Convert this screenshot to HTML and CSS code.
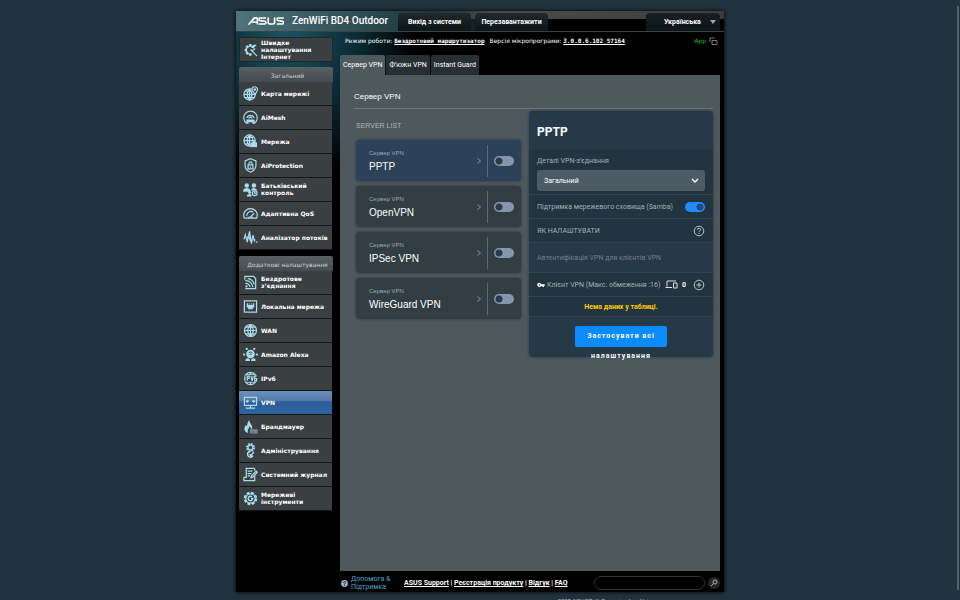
FILE: index.html
```html
<!DOCTYPE html>
<html lang="uk">
<head>
<meta charset="utf-8">
<title>ZenWiFi BD4 Outdoor</title>
<link rel="stylesheet" href="styles.css">
</head>
<body>
<div class="router">
  <header class="topbar">
    <svg class="logo" viewBox="0 0 36 8" role="img" aria-label="ASUS"><g fill="none" stroke="#fff" stroke-width="1.6"><path d="M.5 7.6 6.4.9H9M3.5 4.8 9 5.3M9.4.4V7.6"/><path d="M18 1H11.6Q11 1 11 2.1T12.2 3.6L17 4.2Q18 4.4 18 5.6T16.8 7H10.8"/><path d="M20.2.4V5.4Q20.2 7 21.8 7H25Q26.6 7 26.6 5.4V.4"/><path d="M35.8 1H29.6Q29 1 29 2.1T30.2 3.6L34.6 4.2Q35.6 4.4 35.6 5.6T34.4 7H28.8"/></g></svg>
    <h1 class="model">ZenWiFi BD4 Outdoor</h1>
    <div class="actions">
      <button class="top-btn" type="button">Вихід з системи</button>
      <button class="top-btn" type="button">Перезавантажити</button>
    </div>
    <div class="language">
      <select aria-label="Мова"><option>Українська</option></select>
      <svg viewBox="0 0 6 4"><path d="M0 0H6L3 4Z" fill="#9aa6aa"/></svg>
    </div>
  </header>
  <div class="columns">
    <nav class="sidebar">
      <a class="item quick" href="#"><svg viewBox="0 0 16 16"><path d="M9 13.4A5 5 0 1 1 12.4 6" stroke-width="2.6" stroke-dasharray="2.4 1.3"/><path d="M9 12.6A4.2 4.2 0 1 1 11.5 6.6M8 8 15 15M13 7 9 10M12 3l2 1M9 6l4-3"/></svg>Швидке налаштування Інтернет</a>
      <h2 class="group">Загальний</h2>
      <ul>
        <li><a class="item" href="#"><svg viewBox="0 0 16 16"><circle cx="7" cy="9" r="6"/><path d="M1 9H13M7 3V15M2.5 5.5H9M2 12.5H12M7 3Q2 9 7 15M7 3Q12 9 7 15"/><path d="M13 9Q9.5 5 9.5 3.8A3 3 0 0 1 15.5 3.8Q15.5 5 13 9Z" fill="#3c4143"/><circle cx="12.6" cy="3.8" r=".8"/></svg>Карта мережі</a></li>
        <li><a class="item" href="#"><svg viewBox="0 0 16 16"><path d="M4 14.4A7.2 7.2 0 1 1 12 14.4"/><path d="M4 8.4A4.3 4.3 0 0 1 12 8.4M6 9A2.2 2.2 0 0 1 10 9"/><path d="M3.6 10H12.4V14.6H10V13H6V14.6H3.6Z" class="solid"/></svg>AiMesh</a></li>
        <li><a class="item" href="#"><svg viewBox="0 0 16 16"><circle cx="7" cy="7" r="6"/><path d="M1 7H13M7 1V13M2.5 3.5H11.5M2.5 10.5H8M7 1Q2 7 7 13M7 1Q12 7 11 8"/><path d="M8 9H15V14H8Z" class="solid"/><circle cx="11.5" cy="8.5" r="1.6" class="solid"/></svg>Мережа</a></li>
        <li><a class="item" href="#"><svg viewBox="0 0 16 16"><path d="M8 .8 13.8 3V8Q13.8 12.6 8 15.2 2.2 12.6 2.2 8V3Z"/><path d="M5.4 7.4H10.6V11.6H5.4Z"/><path d="M6.4 7V5.8A1.6 1.6 0 0 1 9.6 5.8V7M8 9V10.5"/></svg>AiProtection</a></li>
        <li><a class="item" href="#"><svg viewBox="0 0 16 16"><g class="solid"><circle cx="4" cy="3.6" r="2.4"/><circle cx="11.6" cy="3.6" r="2.4"/><path d="M.2 10.5V8.5Q1 6.3 4 6.3T7.8 8.5V10.5Z"/><path d="M8.5 9V8.5Q9 6.3 11.6 6.3T15.4 9Z"/><circle cx="7" cy="11" r="1.6"/><path d="M4 15.5Q4 12.8 7 12.8T9 15.5Z"/></g><circle cx="12.5" cy="12" r="2.5"/><path d="M12.5 10.5V12H14"/></svg>Батьківський контроль</a></li>
        <li><a class="item" href="#"><svg viewBox="0 0 16 16"><path d="M1.5 13A7.2 7.2 0 1 1 14.5 13Z"/><path d="M4 10.5A4.5 4.5 0 0 1 11 6.6M12 8 8 11.4M5 12H11"/></svg>Адаптивна QoS</a></li>
        <li><a class="item" href="#"><svg viewBox="0 0 16 16"><path d="M1 10 2.5 5 4.5 13 7 1.5 9 14.5 10.6 5.5 12 11.5 13 10"/><path d="M4.5 9 6 6 8 12M13.6 13H15.5"/></svg>Аналізатор потоків</a></li>
      </ul>
      <h2 class="group second">Додаткові налаштування</h2>
      <ul>
        <li><a class="item" href="#"><svg viewBox="0 0 16 16"><path d="M3 13.5V14.5H13.5V4L11.5 1.5H2V5"/><path d="M2.5 6A7.5 7.5 0 0 1 10.5 13M2.5 9A4.5 4.5 0 0 1 7.5 13M5 3.5A9 9 0 0 1 12 10"/><circle cx="3.8" cy="12" r="1.2" class="solid"/></svg>Бездротове з’єднання</a></li>
        <li><a class="item" href="#"><svg viewBox="0 0 16 16"><path d="M1.5 2H14.5V14H1.5Z"/><path d="M4 4.5H12V9H10.5V11H5.5V9H4Z" class="solid"/><path d="M6.2 4V6.5M8 4V6.5M9.8 4V6.5" stroke="#3c4143"/></svg>Локальна мережа</a></li>
        <li><a class="item" href="#"><svg viewBox="0 0 16 16"><circle cx="8" cy="8" r="6.4"/><path d="M1.6 8H14.4M8 1.6V14.4M2.8 4.5H13.2M2.8 11.5H13.2M8 1.6Q2 8 8 14.4M8 1.6Q14 8 8 14.4"/></svg>WAN</a></li>
        <li><a class="item" href="#"><svg viewBox="0 0 16 16"><circle cx="8" cy="7.5" r="4.6" class="solid"/><path d="M6 6Q8 4.6 10 6M6.6 8Q8 7 9.4 8" stroke="#3c4143" stroke-width=".9"/><g class="solid"><circle cx="4" cy="2" r="1.2"/><circle cx="12" cy="2" r="1.2"/><circle cx="1.2" cy="8" r="1.2"/><circle cx="14.8" cy="8" r="1.2"/><path d="M2.5 15Q2.5 12 5 12T7.5 15ZM8.5 15Q8.5 12 11 12T13.5 15Z"/></g></svg>Amazon Alexa</a></li>
        <li><a class="item" href="#"><svg viewBox="0 0 16 16"><circle cx="8" cy="8" r="6.5"/><path d="M8 1.5V4.5M8 11.5V14.5M3 4H13M3 12H13"/><path d="M1 5H15V11H1Z" class="mask"/><path d="M2 5.5V10.5M4.5 10.5V5.5H6.5V8H4.5M8.5 5.5 9.7 10.5 11 5.5M14.5 5.5H12.5V10.5H14.5V8H12.5"/></svg>IPv6</a></li>
        <li><a class="item active" href="#"><svg viewBox="0 0 16 16"><path d="M1.5 2.5H14.5V11H1.5ZM8 11V14M3 14H13"/><path d="M3.5 6.8H6.5M9.5 6.8H12.5M5 5.5 3.5 6.8 5 8M11 5.5 12.5 6.8 11 8"/></svg>VPN</a></li>
        <li><a class="item" href="#"><svg viewBox="0 0 16 16"><path d="M5.5 15Q1 13.5 1.5 9.5 2 7.5 3.2 6L4.2 8Q4.6 3.5 6.5 1 7 4 8.5 5.5 10.5 7.5 9.8 10.5H8.5Q8 8.5 6.8 7.5 6.8 10 5.4 11 4.6 13 5.5 15Z" class="solid"/><path d="M8 11.5H15V14.8H8ZM8 13H15M11 11.5V13M13 13V14.8" opacity=".5"/></svg>Брандмауер</a></li>
        <li><a class="item" href="#"><svg viewBox="0 0 16 16"><circle cx="8" cy="4.8" r="3.6" stroke-width="2.4" stroke-dasharray="1.8 1"/><circle cx="8" cy="4.8" r="2.6"/><path d="M8 9A3 3 0 1 0 10.5 13.5M7 12 8.5 13.5 11.5 9.5" stroke-width="1.6"/></svg>Адміністрування</a></li>
        <li><a class="item" href="#"><svg viewBox="0 0 16 16"><path d="M12.5 1.5H3.5V11H1V14.5H12.5V9M12.5 1.5V4M5 4.5H10M5 7H9M5 9.5H7.5"/><path d="M8.5 11.5 9 9.5 14 4.5 15.2 5.8 10.4 10.8Z"/></svg>Системний журнал</a></li>
        <li><a class="item" href="#"><svg viewBox="0 0 16 16"><circle cx="8" cy="8" r="6" stroke-width="2.4" stroke-dasharray="3 1.7"/><circle cx="8" cy="8" r="5"/><path d="M9.6 6.2A2.4 2.4 0 1 0 10.4 8H8.5" stroke-width="1.5"/></svg>Мережеві інструменти</a></li>
      </ul>
    </nav>
    <main class="content">
      <div class="status">
        <span>Режим роботи: <a href="#">Бездротовий маршрутизатор</a>Версія мікропрограми: <a href="#">3.0.0.6.102_57164</a></span>
        <span class="app">App</span>
        <svg class="copy" viewBox="0 0 9 9"><path d="M1 5V1H6M3 3.5H8V7.5H3Z" fill="none" stroke="#737b7e"/></svg>
      </div>
      <div class="tabs">
        <a class="tab current" href="#">Сервер VPN</a>
        <a class="tab" href="#">Ф’южн VPN</a>
        <a class="tab" href="#">Instant Guard</a>
      </div>
      <section class="panel">
        <h2 class="title">Сервер VPN</h2>
        <div class="vpn">
          <div class="servers">
            <h3 class="list-title">SERVER LIST</h3>
            <div class="server selected">
              <div class="server-name"><small>Сервер VPN</small><strong>PPTP</strong></div>
              <svg class="chevron" viewBox="0 0 4 6"><path d="M.5.5 3.5 3 .5 5.5"/></svg>
              <div class="server-toggle"><input type="checkbox" class="switch" aria-label="PPTP"></div>
            </div>
            <div class="server">
              <div class="server-name"><small>Сервер VPN</small><strong>OpenVPN</strong></div>
              <svg class="chevron" viewBox="0 0 4 6"><path d="M.5.5 3.5 3 .5 5.5"/></svg>
              <div class="server-toggle"><input type="checkbox" class="switch" aria-label="OpenVPN"></div>
            </div>
            <div class="server">
              <div class="server-name"><small>Сервер VPN</small><strong>IPSec VPN</strong></div>
              <svg class="chevron" viewBox="0 0 4 6"><path d="M.5.5 3.5 3 .5 5.5"/></svg>
              <div class="server-toggle"><input type="checkbox" class="switch" aria-label="IPSec VPN"></div>
            </div>
            <div class="server">
              <div class="server-name"><small>Сервер VPN</small><strong>WireGuard VPN</strong></div>
              <svg class="chevron" viewBox="0 0 4 6"><path d="M.5.5 3.5 3 .5 5.5"/></svg>
              <div class="server-toggle"><input type="checkbox" class="switch" aria-label="WireGuard VPN"></div>
            </div>
          </div>
          <form class="details">
            <h3 class="details-title">PPTP</h3>
            <div class="field">
              <label for="vpn-details">Деталі VPN-з’єднання</label>
              <div class="dropdown">
                <select id="vpn-details"><option>Загальний</option></select>
                <svg viewBox="0 0 8 5"><path d="M1 1 4 4 7 1" fill="none" stroke="#fff" stroke-width="1.3"/></svg>
              </div>
            </div>
            <div class="row">
              <label for="samba">Підтримка мережевого сховища (Samba)</label>
              <input type="checkbox" class="switch" id="samba" checked>
            </div>
            <div class="row">
              <span>ЯК НАЛАШТУВАТИ</span>
              <svg class="round" viewBox="0 0 12 12"><circle cx="6" cy="6" r="4.8"/><path d="M4.3 4.8Q4.4 3.3 6 3.3T7.7 4.8Q7.7 5.5 6.8 6 6 6.5 6 7.1M6 8V9"/></svg>
            </div>
            <div class="row auth">Автентифікація VPN для клієнтів VPN</div>
            <div class="row clients">
              <svg class="key" viewBox="0 0 8 6"><path d="M2.3.7A2.2 2.2 0 1 0 4.3 4H5.3V5H7V4H7.7V2.2H4.3Q3.7.7 2.3.7Z" fill="#fff"/><circle cx="2.3" cy="3" r=".8" fill="#21343f"/></svg>
              <span>Клієнт VPN (Макс. обмеження :16)</span>
              <svg class="devices" viewBox="0 0 13 9"><path d="M2 6.5V1H11M.5 7.5H7M8.5 3H12V8H8.5Z" fill="none" stroke="#d8dfe2"/></svg>
              <b>0</b>
              <button class="add" type="button" aria-label="Додати"><svg class="round" viewBox="0 0 12 12"><circle cx="6" cy="6" r="4.8"/><path d="M3.4 6H8.6M6 3.4V8.6"/></svg></button>
            </div>
            <div class="row empty">Нема даних у таблиці.</div>
            <div class="submit"><button class="apply" type="button">Застосувати всі налаштування</button></div>
          </form>
        </div>
      </section>
    </main>
  </div>
  <footer class="footer">
    <a class="help" href="#"><svg viewBox="0 0 7 7"><circle cx="3.5" cy="3.5" r="3.4" fill="#9ab4c0"/><path d="M2.4 2.7Q2.6 1.7 3.5 1.7T4.6 2.7Q4.5 3.3 3.5 3.9V4.5M3.5 5V5.7" fill="none" stroke="#000" stroke-width=".8"/></svg><span>Допомога &amp; Підтримка</span></a>
    <p class="links"><a href="#">ASUS Support</a> | <a href="#">Реєстрація продукту</a> | <a href="#">Відгук</a> | <a href="#">FAQ</a></p>
    <input class="search" type="text" aria-label="Пошук">
    <button class="search-btn" type="button" aria-label="Знайти"><svg viewBox="0 0 8 8"><circle cx="5" cy="3" r="2"/><path d="M3.5 4.5 1 7"/></svg></button>
  </footer>
</div>
<p class="copyright">2025 ASUSTeK Computer Inc. Усі права захищено законом.</p>
</body>
</html>
```
FILE: styles.css
```css
* { box-sizing: border-box; }
html { overflow: hidden; background: #21333e; }
body {
  position: relative;
  margin: 0;
  padding-top: 11px;
  height: 100vh;
  overflow: hidden;
  background: #21333e;
  color: #fff;
  font: 7px/8px Roboto, "Liberation Sans", sans-serif;
}
body::after {
  content: "";
  position: absolute;
  top: 6px;
  right: 1px;
  bottom: 10px;
  width: 2px;
  background: #52606a;
}
h1, h2, h3, p, ul { margin: 0; padding: 0; font-weight: normal; }
ul { list-style: none; }
a { color: inherit; text-decoration: none; }
button, input, select { margin: 0; padding: 0; border: 0; color: inherit; font: inherit; appearance: none; background: none; }

.router {
  max-width: 488px;
  margin: 0 auto;
  background:
    linear-gradient(100deg, transparent 40%, #4c4c4c 52%, #3c3c3c) top / 100% 8px no-repeat,
    linear-gradient(90deg, #4f747c, #1f3a43 180px, transparent 320px) top / 100% 20px no-repeat,
    radial-gradient(130px 150px at 50px 20px, #1b5361 0, #0d2f3a 50%, transparent) no-repeat,
    #000;
  box-shadow: 0 0 4px #000;
}
.topbar { display: flex; align-items: center; height: 21px; padding: 0 4px 0 12px; border-bottom: 1px solid #3a4346; }
.logo { flex: none; width: 36px; height: 8px; }
.model { flex: none; width: 114px; padding-left: 8px; font: 500 10px/12px Roboto, sans-serif; white-space: nowrap; }
.actions { display: flex; gap: 4px; padding-top: 2px; }
.top-btn {
  width: 73px; height: 18px;
  border-radius: 4px 4px 0 0;
  background: linear-gradient(#20292c, #0c1417);
  font: bold 7px/8px Roboto, sans-serif;
}
.language { display: flex; align-items: center; width: 74px; height: 18px; margin: 2px 0 0 auto; padding: 0 4px 0 18px; background: linear-gradient(#182023, #0c1417); border-radius: 4px 4px 0 0; }
.language select { flex: 1; min-width: 0; font: bold 7px/8px Roboto, sans-serif; }
.language svg { width: 6px; height: 4px; }

.columns { display: grid; grid-template-columns: 94px minmax(0, 1fr); column-gap: 7px; padding: 0 4px 0 3px; }
.sidebar { padding-top: 5px; }
.item {
  display: flex; align-items: center; gap: 3px;
  height: 24px; padding: 0 2px 1px 4px; margin-right: 1px;
  border-bottom: 1px solid #111618;
  background: #3a3f42;
  font: bold 6px/7px "DejaVu Sans", sans-serif;
}
.item svg { flex: none; width: 15px; height: 15px; fill: none; stroke: #a9dcec; stroke-width: 1.3; }
.item .solid { fill: #a9dcec; stroke: none; }
.item .mask { fill: #3a3f42; stroke: none; }
.quick { height: 25px; border: 1px solid #1b2a2f; margin-right: 0; padding: 0 2px 0 3px; }
.active { background: linear-gradient(#6c91b9 0, #5078a8 45%, #2c5c98 46%, #2d64a0); }
.group { height: 15px; margin: 5px 0 0; padding-left: 3px; border-radius: 2px 2px 0 0; background: linear-gradient(#586064, #454b4e); color: #ccd3d5; font: 6px/17px "DejaVu Sans", sans-serif; text-align: center; white-space: nowrap; }
.second { margin-top: 6px; }

.status { display: flex; align-items: center; height: 18px; padding: 0 2px 0 5px; font: 6px/8px "DejaVu Sans", sans-serif; white-space: nowrap; }
.status a { margin-right: 5px; font-family: "DejaVu Sans Mono", monospace; font-weight: bold; text-decoration: underline; }
.app { margin-left: auto; color: #1ec81e; }
.copy { width: 9px; height: 9px; margin-left: 3px; }
.tabs { display: flex; gap: 1px; padding-top: 5px; }
.tab { height: 20px; padding: 0 3px; border-radius: 2px 2px 0 0; background: #262f33; line-height: 21px; white-space: nowrap; }
.current { background: #4d595d; }
.panel { min-height: 496px; padding: 17px 7px 0 14px; background: #4d595d; }
.title { padding-bottom: 6px; border-bottom: 1px solid #6b7679; font: 8px/10px "Liberation Sans", sans-serif; }
.vpn { display: grid; grid-template-columns: minmax(0, 167px) minmax(0, 184px); justify-content: space-between; padding-top: 2px; }
.servers { padding-left: 2px; }
.list-title { padding: 10px 0; color: #aab7bd; font: 7px/9px "Liberation Sans", sans-serif; }
.server { display: flex; align-items: center; height: 41px; margin-bottom: 5px; padding-left: 13px; border-radius: 4px; background: #313e43; box-shadow: 0 0 3px #28353b; font-family: "Liberation Sans", sans-serif; }
.server.selected { background: #2b4259; }
.server-name { flex: 1; }
.server small { display: block; color: #9aa9b0; font-size: 6px; line-height: 8px; }
.server strong { display: block; padding-top: 4px; font-weight: normal; font-size: 10px; line-height: 12px; }
.chevron { width: 4px; height: 6px; fill: none; stroke: #8797a0; stroke-width: 1; }
.server-toggle { display: flex; align-items: center; height: 32px; margin-left: 6px; padding: 0 7px 0 6px; border-left: 1px solid #5c6c76; }
.switch { display: block; width: 20px; height: 10px; border-radius: 5px; background: radial-gradient(circle at 5px 5px, #2b3a45 3px, #8595ae 4px); flex: none; }
.switch:checked { background: radial-gradient(circle at 15px 5px, #1d4a80 3px, #248afc 4px); }

.details { align-self: start; height: 246px; border-radius: 4px; background: #263947; box-shadow: 0 0 3px #26343b; color: #a3b0b8; }
.details-title { padding: 14px 8px 11px; color: #fff; font: bold 12px/14px Roboto, sans-serif; }
.field { padding: 5px 8px 3px; border-top: 1px solid #22323c; background: #21343f; line-height: 10px; }
.dropdown { display: flex; align-items: center; height: 21px; margin-top: 4px; padding: 0 6px 0 7px; border-radius: 3px; background: #4d5b65; color: #fff; }
.dropdown select { flex: 1; min-width: 0; }
.dropdown svg { width: 8px; height: 5px; }
.row { display: flex; align-items: center; justify-content: space-between; height: 24px; padding: 0 8px; border-top: 1px solid #304350; background: #21343f; white-space: nowrap; }
.round { display: block; width: 12px; height: 12px; fill: none; stroke: #b9c3c8; }
.auth { height: 30px; background: #263947; color: #71808a; }
.clients { justify-content: flex-start; gap: 2px; }
.key { width: 8px; height: 6px; }
.devices { width: 13px; height: 9px; margin-left: auto; }
.clients b { margin: 0 5px 0 2px; color: #fff; font-size: 7px; }
.empty { height: 20px; justify-content: center; color: #fc0; font-weight: bold; }
.submit { padding-top: 9px; border-top: 1px solid #304350; }
.apply { display: block; width: 92px; height: 21px; margin: 0 auto; border-radius: 2px; background: #0a8cff; color: #fff; font: bold 7px/20px Roboto, sans-serif; letter-spacing: 1px; }

.footer { display: flex; align-items: center; height: 21px; padding: 3px 4px 0 105px; line-height: 8px; }
.help { display: flex; align-items: center; gap: 3px; width: 63px; color: #5aa0d0; }
.help svg { width: 7px; height: 7px; flex: none; }
.help span { width: 45px; }
.links { font-weight: bold; white-space: nowrap; }
.links a { text-decoration: underline; }
.search { width: 111px; height: 14px; margin-left: auto; border: 1px solid #333; border-radius: 7px; padding: 0 6px; }
.search-btn { width: 12px; height: 12px; margin-left: 3px; border-radius: 50%; background: #262626; }
.search-btn svg { display: block; width: 8px; height: 8px; margin: 0 auto; fill: none; stroke: #aaa; }
.copyright { max-width: 488px; margin: 5px auto 0; padding-right: 3px; color: #b8c2c8; text-align: right; font: 6px/8px "Liberation Sans", sans-serif; }
```
